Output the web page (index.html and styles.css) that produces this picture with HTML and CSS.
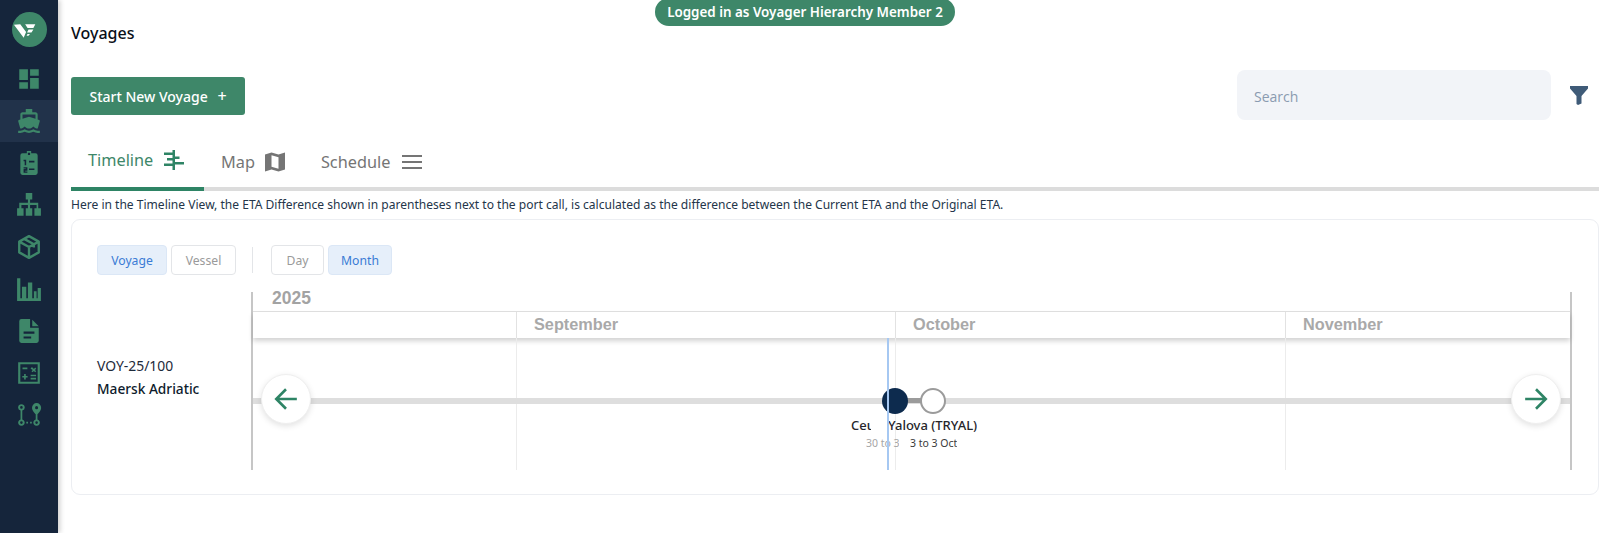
FILE: index.html
```html
<html>
    <head>
        <link rel="stylesheet" href="styles.css">
    </head>
    <body>
        <div class="container">
            <nav class="sidebar">
                <div class="logo">
                    <svg viewBox="0 0 36 36" width="36" height="36"><path fill="#fff" d="M2 12.500l6.500-.5 6 8-2.500 6zM13.500 12H24l-2 4h-6zM17 17.500h5l-2 3h-4.500zM16 22h2.500l-1.500 2h-2z"/></svg>
                </div>
                <a class="nav-item"><svg viewBox="0 0 24 24" width="26" height="26"><path d="M3 13h8V3H3v10zm0 8h8v-6H3v6zm10 0h8V11h-8v10zm0-18v6h8V3h-8z"/></svg></a>
                <a class="nav-item active"><svg viewBox="0 0 24 24" width="26" height="26"><path d="M20 21c-1.390 0-2.780-.47-4-1.320-2.440 1.710-5.560 1.710-8 0C6.780 20.530 5.390 21 4 21H2v2h2c1.380 0 2.740-.35 4-.99 2.520 1.290 5.480 1.290 8 0 1.260.65 2.620.99 4 .99h2v-2h-2zM3.950 19H4c1.600 0 3.020-.88 4-2 .98 1.120 2.400 2 4 2s3.020-.88 4-2c.98 1.120 2.400 2 4 2h.05l1.890-6.680c.08-.26.06-.54-.06-.78s-.34-.42-.6-.5L20 10.620V6c0-1.100-.9-2-2-2h-3V1H9v3H6c-1.100 0-2 .9-2 2v4.620l-1.290.42c-.26.08-.48.26-.6.5s-.15.52-.06.78L3.950 19zM6 6h12v3.970L12 8 6 9.970V6z"/></svg></a>
                <a class="nav-item"><svg viewBox="0 0 24 24" width="26" height="26"><path fill-rule="evenodd" d="M10 1h4v2h4a2 2 0 0 1 2 2v16a2 2 0 0 1-2 2H6a2 2 0 0 1-2-2V5a2 2 0 0 1 2-2h4V1zm1 1.500v2h2v-2h-2zM7 9v1.300h1V14h1.400V9H7zm5 1v1.500h5V10h-5zm-5 6v1h2v.6H7V21h3.500v-1.200H8.500v-.6h2V16H7zm5 1v1.500h5V17h-5z"/></svg></a>
                <a class="nav-item"><svg viewBox="0 0 24 24" width="26" height="26"><path d="M9 1h6v6h-2v3h7.500v5H23v7h-6v-7h2V12h-6v3h2v7H9v-7h2v-3H5v3h2v7H1v-7h2v-5h8V7H9z"/></svg></a>
                <a class="nav-item"><svg viewBox="0 0 24 24" width="26" height="26" fill="none"><path d="M12 2l9 5v10l-9 5-9-5V7zM3 7l9 5 9-5M12 12v10M7.500 4.500l9 5v3"/></svg></a>
                <a class="nav-item"><svg viewBox="0 0 24 24" width="26" height="26"><path d="M1 2h3v19H1zM5.500 10h4v11h-4zM11 6h4v15h-4zM16.500 14h2.500v7h-2.500zM20 11h3v10h-3zM1 20.500h22V23H1z"/></svg></a>
                <a class="nav-item"><svg viewBox="0 0 24 24" width="26" height="26"><path fill-rule="evenodd" d="M5 1h8v8h8v12a2 2 0 0 1-2 2H5a2 2 0 0 1-2-2V3a2 2 0 0 1 2-2zm2 11.500v2h10v-2H7zm0 4.500v2h7v-2H7z"/><path d="M15 1.500l6 6h-6z"/></svg></a>
                <a class="nav-item"><svg viewBox="0 0 24 24" width="26" height="26"><path fill-rule="evenodd" d="M2 2h20v20H2V2zm2 2v16h16V4H4zm2 3h4.500v1.500H6V7zm8 0h1.300l1.200 1.200L17.700 7l1 1-1.200 1.200 1.200 1.200-1 1-1.200-1.200-1.200 1.200-1-1 1.200-1.200L13.500 8zM7.500 13H9v1.700h1.700v1.500H9V18H7.500v-1.800H5.800v-1.500h1.700V13zm6 .6h5v1.500h-5v-1.500zm0 2.800h5v1.500h-5v-1.500z"/></svg></a>
                <a class="nav-item"><svg viewBox="0 0 24 24" width="26" height="26"><path fill-rule="evenodd" d="M5 2a3 3 0 0 1 .8 5.900v8.200a3 3 0 1 1-1.600 0V7.900A3 3 0 0 1 5 2zm0 1.800a1.200 1.200 0 1 0 0 2.400 1.200 1.200 0 0 0 0-2.400zm0 14a1.200 1.200 0 1 0 0 2.400 1.200 1.200 0 0 0 0-2.400zM19 1a4.200 4.200 0 0 1 4.200 4.200c0 2.800-3 5.500-3.400 6v4.900a3 3 0 1 1-1.600 0v-4.900c-.4-.5-3.400-3.200-3.400-6A4.200 4.200 0 0 1 19 1zm0 2.800a1.400 1.400 0 1 0 0 2.800 1.400 1.400 0 0 0 0-2.800zm0 14a1.200 1.200 0 1 0 0 2.400 1.200 1.200 0 0 0 0-2.400zM9.500 18.200h1.600v1.600H9.500zm3.500 0h1.600v1.600H13z"/></svg></a>
            </nav>

            <main class="main">
                <div class="login-pill">Logged in as Voyager Hierarchy Member 2</div>
                <h1 class="title">Voyages</h1>

                <div class="toolbar">
                    <button class="start-btn" type="button">Start New Voyage <span class="plus">+</span></button>
                    <div class="search-wrap">
                        <input class="search" type="text" placeholder="Search">
                        <svg class="filter" viewBox="0 0 18 19" width="18" height="19"><path fill="#3f5b78" d="M0 0h18v2.500L11.500 10v7.500L8 19l-1.500-1V10L0 2.500z"/></svg>
                    </div>
                </div>

                <div class="tabs">
                    <a class="tab current">Timeline
                        <svg viewBox="0 0 22 20" width="22" height="20"><path d="M9.500 0H12v20H9.500zM1 2.500h8.500V5H1zM4 8h5.500v2.500H4zM1 13.500h8.500V16H1zM12 6.500h4.500V9H12zM12 12h9v2.500h-9z"/></svg>
                    </a>
                    <a class="tab">Map
                        <svg viewBox="0 0 20 20" width="20" height="20"><path fill-rule="evenodd" d="M0 2.500l6.500-2 7 2 6.500-2v17l-6.500 2-7-2-6.500 2zM6.500 3.200v11.600l7 2V5.200z"/></svg>
                    </a>
                    <a class="tab tab-schedule">Schedule
                        <svg viewBox="0 0 20 20" width="20" height="20"><path d="M0 3h20v2H0zM0 9h20v2H0zM0 15h20v2H0z"/></svg>
                    </a>
                </div>
                <p class="note">Here in the Timeline View, the ETA Difference shown in parentheses next to the port call, is calculated as the difference between the Current ETA and the Original ETA.</p>

                <section class="card">
                    <div class="filters">
                        <button class="chip on chip-voyage" type="button">Voyage</button>
                        <button class="chip chip-vessel" type="button">Vessel</button>
                        <span class="sep"></span>
                        <button class="chip chip-day" type="button">Day</button>
                        <button class="chip on chip-month" type="button">Month</button>
                    </div>
                    <div class="row">
                        <div class="voyage-info">
                            <div class="voyage-code">VOY-25/100</div>
                            <div class="vessel-name">Maersk Adriatic</div>
                        </div>
                        <div class="timeline">
                            <div class="year">2025</div>
                            <div class="months">
                                <div class="month m0"></div>
                                <div class="month m1">September</div>
                                <div class="month m2">October</div>
                                <div class="month m3">November</div>
                            </div>
                            <div class="lane">
                                <span class="grid g1"></span>
                                <span class="grid g2"></span>
                                <span class="grid g3"></span>
                                <span class="track"></span>
                                <span class="leg"></span>
                                <span class="dot dot-done"></span>
                                <span class="dot dot-next"></span>
                                <span class="port-name ceuta">Ceuta</span>
                                <span class="port-date ceuta-date">30 to 30 Sep</span>
                                <span class="port-name yalova">Yalova (TRYAL)</span>
                                <span class="port-date yalova-date">3 to 3 Oct</span>
                                <span class="today"></span>
                                <button class="arrow arrow-left" type="button"><svg viewBox="0 0 24 24" width="26" height="26"><path d="M22 12H3M12 3l-9 9 9 9"/></svg></button>
                                <button class="arrow arrow-right" type="button"><svg viewBox="0 0 24 24" width="26" height="26"><path d="M2 12h19M12 3l9 9-9 9"/></svg></button>
                            </div>
                        </div>
                    </div>
                </section>
            </main>
        </div>
    </body>
</html>
```

FILE: styles.css
```css
* {
    margin: 0;
    padding: 0;
    box-sizing: border-box;
}

html,body {
    height: 100%;
    overflow: hidden;
    background: #fff;
}

body {
    font-family: "Noto Sans", Roboto, sans-serif;
    color: #0e1b2c;
}

.container {
    display: flex;
    width: 100vw;
    height: 100vh;
}

/* sidebar */
.sidebar {
    width: 58px;
    flex-shrink: 0;
    background: #15253b;
    box-shadow: 2px 0 5px rgba(0,0,0,.2);
    display: flex;
    flex-direction: column;
    align-items: center;
    padding-top: 12px;
}

.logo {
    width: 35px;
    height: 35px;
    border-radius: 50%;
    background: #3e8769;
    display: flex;
    justify-content: center;
    align-items: center;
    margin-bottom: 11px;
}

.nav-item {
    width: 100%;
    height: 42px;
    display: flex;
    justify-content: center;
    align-items: center;
}

.nav-item svg {
    fill: #3e8769;
}

.nav-item svg[fill="none"] {
    fill: none;
    stroke: #3e8769;
    stroke-width: 2.2;
    stroke-linejoin: round;
}

.nav-item.active {
    background: #21324a;
}

/* page */
.main {
    flex: 1;
    padding: 0 3px 0 13px;
    position: relative;
}

.login-pill {
    position: absolute;
    top: -2px;
    left: 597px;
    width: 300px;
    height: 28px;
    border-radius: 14px;
    background: #3e8769;
    color: #fff;
    font-size: 13.4px;
    font-weight: 600;
    line-height: 28px;
    text-align: center;
}

.title {
    font-size: 16px;
    font-weight: 500;
    line-height: 22px;
    margin-top: 22px;
    color: #0a0f18;
}

.toolbar {
    display: flex;
    justify-content: space-between;
    align-items: flex-start;
    margin-top: 26px;
    height: 71px;
}

.start-btn {
    width: 174px;
    height: 38px;
    margin-top: 7px;
    border: none;
    border-radius: 3px;
    background: #3e8769;
    color: #fff;
    font-family: inherit;
    font-size: 14px;
    font-weight: 500;
}

.plus {
    margin-left: 6px;
    font-size: 16px;
}

.search-wrap {
    display: flex;
    align-items: flex-start;
    gap: 19px;
    padding-right: 11px;
}

.search {
    width: 314px;
    height: 50px;
    border: none;
    border-radius: 8px;
    background: #f2f4f8;
    padding: 2px 0 0 17px;
    font-family: "Open Sans", sans-serif;
    font-size: 14px;
}

.search::placeholder {
    color: #8a9bb0;
}

.filter {
    margin-top: 16px;
}

.tabs {
    display: flex;
    height: 50px;
    border-bottom: 4px solid #dcdcdc;
}

.tab {
    display: flex;
    align-items: center;
    gap: 10px;
    height: 50px;
    padding: 0 19px 8px 17px;
    color: #757575;
    font-size: 16.3px;
}

.tab svg {
    fill: #757575;
}

.tab.current {
    width: 133px;
    padding-right: 0;
    color: #3e8769;
    border-bottom: 4px solid #2e8465;
}

.tab.current svg {
    fill: #2e8465;
}

.tab-schedule {
    gap: 12px;
}

.note {
    font-size: 12.05px;
    line-height: 18px;
    margin-top: 5px;
    color: #24354a;
}

/* card */
.card {
    margin-top: 5px;
    height: 276px;
    border: 1px solid #eceef2;
    border-radius: 9px;
    padding: 25px 26px 0 25px;
}

.filters {
    display: flex;
    align-items: center;
    gap: 4px;
    height: 30px;
}

.chip {
    height: 30px;
    border: 1px solid #e3e5e8;
    border-radius: 4px;
    background: #fff;
    color: #9a9a9a;
    font-family: inherit;
    font-size: 12.2px;
}

.chip.on {
    background: #e6effa;
    border-color: #dbe7f6;
    color: #3a7bd5;
}

.chip-voyage { width: 70px; }
.chip-vessel { width: 65px; }
.chip-day { width: 53px; }
.chip-month { width: 64px; }

.sep {
    width: 1px;
    height: 26px;
    background: #e3e5e8;
    margin: 0 14px 0 12px;
}

.row {
    display: flex;
    margin-top: 17px;
}

.voyage-info {
    width: 154px;
    padding-top: 65px;
}

.voyage-code {
    font-size: 13.9px;
    line-height: 18px;
    color: #1d2a3a;
}

.vessel-name {
    font-size: 13.7px;
    font-weight: 500;
    line-height: 28px;
    color: #0e1b2c;
}

/* timeline */
.timeline {
    width: 1321px;
    height: 178px;
    border-left: 2px solid #c6c6c6;
    border-right: 2px solid #c6c6c6;
}

.year {
    height: 20px;
    padding-left: 19px;
    font-family: "Liberation Sans", sans-serif;
    font-size: 17.5px;
    font-weight: 700;
    line-height: 13px;
    color: #a3a3a3;
    border-bottom: 1px solid #e2e2e2;
}

.months {
    display: flex;
    height: 26px;
    box-shadow: 0 3px 5px rgba(0,0,0,.18);
}

.month {
    padding-left: 17px;
    font-family: "Liberation Sans", sans-serif;
    font-size: 16.3px;
    font-weight: 700;
    line-height: 25px;
    color: #a9a9a9;
    border-left: 1px solid #e2e2e2;
}

.m0 { width: 263px; border-left: none; }
.m1 { width: 379px; }
.m2 { width: 390px; }
.m3 { flex: 1; }

.lane {
    position: relative;
    height: 132px;
}

.grid {
    position: absolute;
    top: 0;
    bottom: 0;
    width: 1px;
    background: #ececec;
}

.g1 { left: 263px; }
.g2 { left: 642px; }
.g3 { left: 1032px; }

.track {
    position: absolute;
    left: 0;
    right: 0;
    top: 60px;
    height: 6px;
    background: #dedede;
}

.leg {
    position: absolute;
    left: 642px;
    top: 60px;
    width: 38px;
    height: 5px;
    background: #9b9b9b;
}

.dot {
    position: absolute;
    top: 50px;
    width: 26px;
    height: 26px;
    border-radius: 50%;
}

.dot-done {
    left: 629px;
    background: #0d2b4e;
}

.dot-next {
    left: 667px;
    background: #fff;
    border: 2px solid #9b9b9b;
}

.port-name {
    position: absolute;
    top: 77px;
    font-size: 13px;
    font-weight: 500;
    line-height: 20px;
    color: #26262b;
    white-space: nowrap;
    overflow: hidden;
}

.port-date {
    position: absolute;
    top: 97px;
    font-size: 10.5px;
    line-height: 16px;
    white-space: nowrap;
    overflow: hidden;
    color: #3a3a3a;
}

.ceuta {
    left: 598px;
    width: 20px;
}

.ceuta-date {
    left: 613px;
    width: 33px;
    color: #a6a6a6;
}

.yalova {
    left: 635px;
}

.yalova-date {
    left: 657px;
}

.today {
    position: absolute;
    left: 634px;
    top: 0;
    bottom: 0;
    width: 2px;
    background: #a6c8f2;
}

.arrow {
    position: absolute;
    top: 36px;
    width: 50px;
    height: 50px;
    border: 1px solid #efefef;
    border-radius: 50%;
    background: #fff;
    box-shadow: 0 2px 6px rgba(0,0,0,.12);
    display: flex;
    justify-content: center;
    align-items: center;
}

.arrow svg {
    fill: none;
    stroke: #2e8465;
    stroke-width: 2.4;
}

.arrow-left { left: 8px; }
.arrow-right { right: 9px; }
```
